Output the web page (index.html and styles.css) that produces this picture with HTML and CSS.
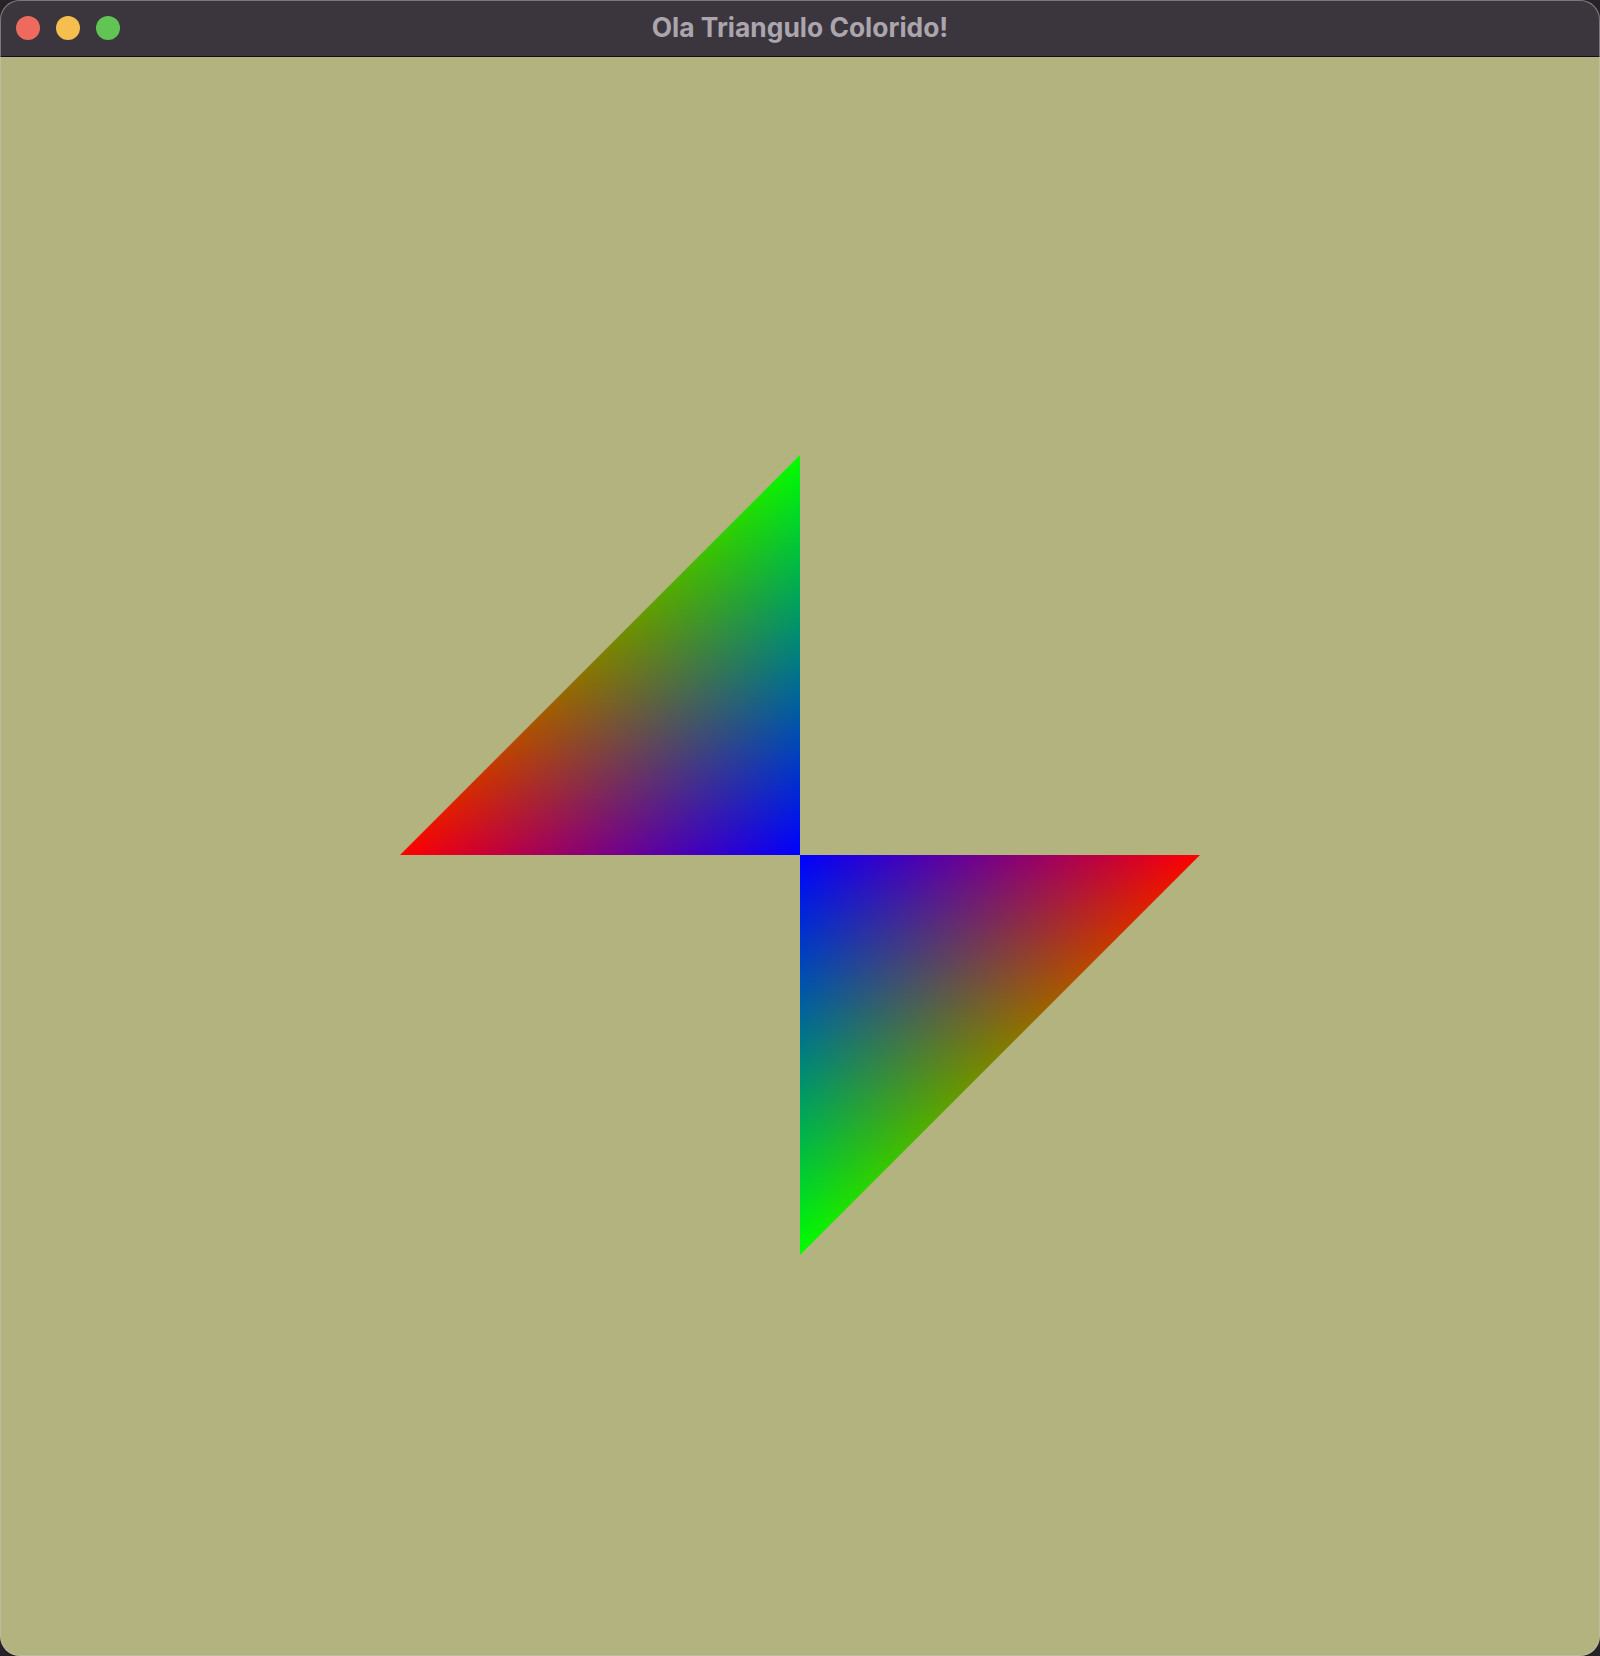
FILE: index.html
```html
<!DOCTYPE html>
<html lang="pt">
<head>
<meta charset="utf-8">
<title>Ola Triangulo Colorido!</title>
<link rel="stylesheet" href="styles.css">
</head>
<body>
<div class="window">
  <div class="titlebar">
    <div class="lights">
      <span class="light red"></span>
      <span class="light yellow"></span>
      <span class="light green"></span>
    </div>
    <div class="title">Ola Triangulo Colorido!</div>
    <div class="spacer"></div>
  </div>
  <div class="viewport">
    <div class="tri tri-top"></div>
    <div class="tri tri-bottom"></div>
  </div>
</div>
</body>
</html>
```

FILE: styles.css
```css
html, body {
  margin: 0;
  padding: 0;
  background: #252327;
}

.window {
  position: relative;
  width: 1600px;
  height: 1656px;
  border-radius: 20px;
  overflow: hidden;
  display: flex;
  flex-direction: column;
  background: #b3b380;
}

.window::after {
  content: "";
  position: absolute;
  inset: 0;
  border-radius: 20px;
  box-shadow: inset 0 0 0 1px rgba(200, 200, 200, 0.45);
  pointer-events: none;
}

.titlebar {
  height: 56px;
  flex: none;
  background: #3b363e;
  border-bottom: 1px solid #121014;
  display: grid;
  grid-template-columns: 1fr auto 1fr;
  align-items: center;
}

.lights {
  display: flex;
  gap: 16px;
  padding-left: 16px;
}

.light {
  width: 24px;
  height: 24px;
  border-radius: 50%;
}

.light.red { background: #ee6a5f; }
.light.yellow { background: #f5bf4f; }
.light.green { background: #61c554; }

.title {
  font-family: "Inter", "Noto Sans", sans-serif;
  font-weight: 700;
  font-size: 26.4px;
  color: #aba5ad;
  padding-bottom: 3px;
}

.viewport {
  flex: 1;
  display: grid;
  grid-template-columns: repeat(4, 400px);
  grid-template-rows: 398px 400px 400px 1fr;
}

.tri {
  background-blend-mode: screen;
}

.tri-top {
  grid-column: 2;
  grid-row: 2;
  clip-path: polygon(0 100%, 100% 100%, 100% 0);
  background-image:
    linear-gradient(to right, #ff0000 0%, #000000 100%),
    linear-gradient(to bottom, #00ff00 0%, #000000 100%),
    linear-gradient(to bottom right, #000000 50%, #0000ff 100%);
}

.tri-bottom {
  grid-column: 3;
  grid-row: 3;
  clip-path: polygon(0 0, 100% 0, 0 100%);
  background-image:
    linear-gradient(to right, #000000 0%, #ff0000 100%),
    linear-gradient(to bottom, #000000 0%, #00ff00 100%),
    linear-gradient(to bottom right, #0000ff 0%, #000000 50%);
}
```
